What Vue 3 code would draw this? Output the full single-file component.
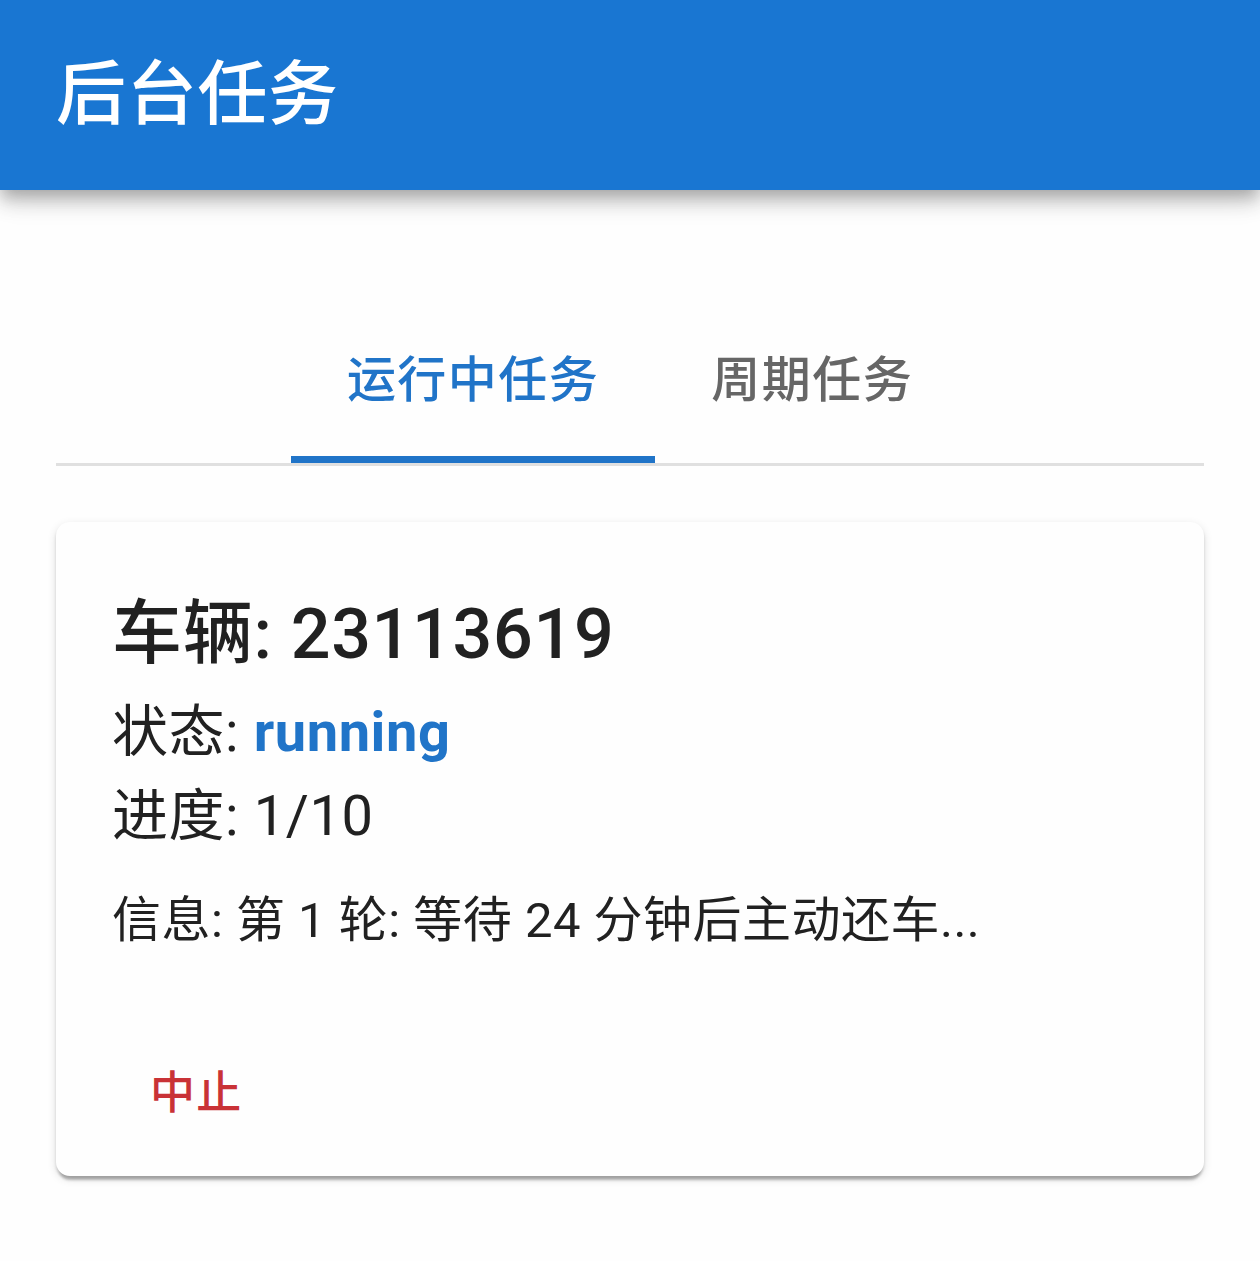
<script setup>
import { ref } from 'vue'

const tabs = ['运行中任务', '周期任务']
const active = ref(0)
</script>

<template>
  <div class="page">
    <header class="app-bar">
      <h1>后台任务</h1>
    </header>
    <main>
      <div class="tabs" role="tablist">
        <button
          v-for="(tab, i) in tabs"
          :key="tab"
          type="button"
          role="tab"
          class="tab"
          :class="{ selected: active === i }"
          :aria-selected="active === i"
          @click="active = i"
        >{{ tab }}</button>
      </div>
      <article class="card">
        <h2>车辆: 23113619</h2>
        <p class="line">状态: <strong>running</strong></p>
        <p class="line">进度: 1/10</p>
        <p class="info">信息: 第 1 轮: 等待 24 分钟后主动还车...</p>
        <button type="button" class="stop">中止</button>
      </article>
    </main>
  </div>
</template>

<style>
body {
  margin: 0;
  background: #fefefe;
}
</style>

<style scoped>
.page {
  font-family: Roboto, "Noto Sans CJK SC", sans-serif;
  color: #212121;
}
.app-bar {
  display: flex;
  align-items: center;
  height: 190px;
  padding: 0 56px;
  box-sizing: border-box;
  background: #1976d2;
  color: #fff;
  box-shadow: 0 7px 14px -3px rgba(0, 0, 0, 0.2), 0 14px 17px 0 rgba(0, 0, 0, 0.14), 0 3px 34px 0 rgba(0, 0, 0, 0.12);
}
h1,
h2,
p {
  margin: 0;
  letter-spacing: 0.01em;
}
h1,
h2 {
  font-size: 70px;
  font-weight: 500;
  line-height: 112px;
}
main {
  padding: 104px 56px 56px;
}
.tabs {
  display: flex;
  justify-content: center;
  border-bottom: 3px solid #e0e0e0;
}
.tab {
  height: 169px;
  padding: 0 56px;
  border: 0;
  border-bottom: 7px solid transparent;
  background: none;
  color: #666;
  font: inherit;
  font-size: 49px;
  font-weight: 500;
  letter-spacing: 0.03em;
}
.tab.selected {
  color: #2074c8;
  border-bottom-color: #2074c8;
}
.card {
  margin-top: 56px;
  padding: 56px 56px 28px;
  border-radius: 14px;
  background: #fefefe;
  box-shadow: 0 7px 3px -3px rgba(0, 0, 0, 0.2), 0 3px 3px 0 rgba(0, 0, 0, 0.14), 0 3px 10px 0 rgba(0, 0, 0, 0.12);
}
.line {
  font-size: 56px;
  line-height: 84px;
}
.line strong {
  color: #2074c8;
  font-weight: 700;
}
.info {
  margin-top: 28px;
  font-size: 49px;
  line-height: 70px;
}
.stop {
  margin-top: 84px;
  padding: 14px 38px;
  border: 0;
  background: none;
  color: #c93236;
  font: inherit;
  font-size: 45px;
  font-weight: 500;
  line-height: 80px;
  letter-spacing: 0.03em;
}
</style>
